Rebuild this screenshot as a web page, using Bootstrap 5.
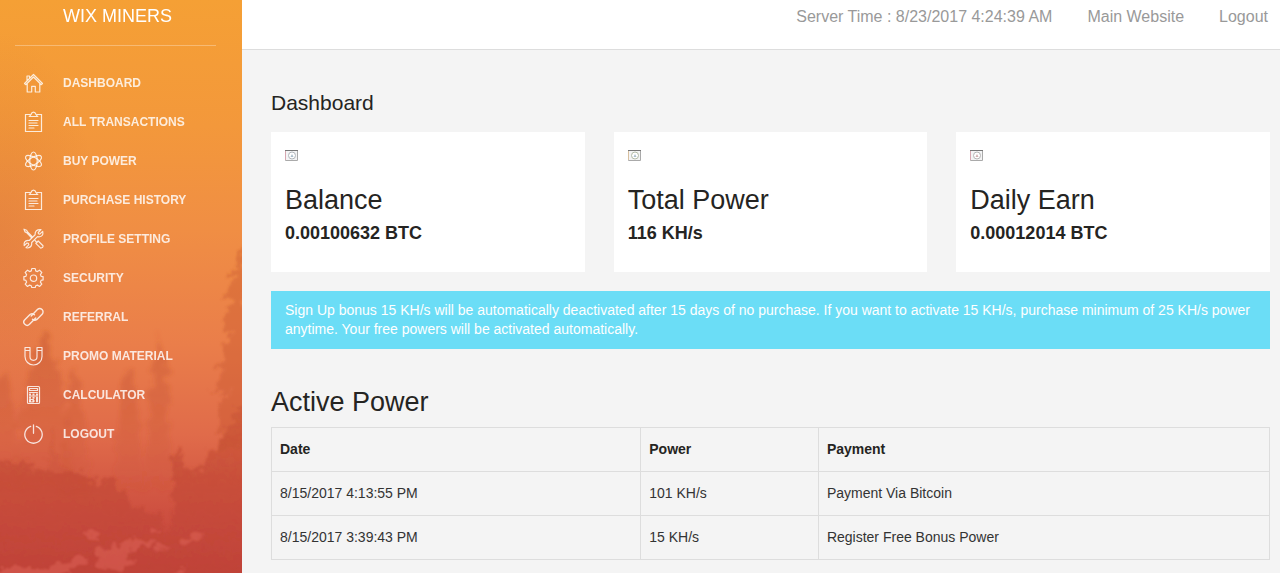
<!DOCTYPE html>
<html lang="en">
<head>
<meta charset="utf-8">
<meta name="viewport" content="width=device-width, initial-scale=1">
<title>Wix Miners - Dashboard</title>
<link rel="stylesheet" href="https://cdn.jsdelivr.net/npm/bootstrap@5.3.0/dist/css/bootstrap.min.css">
<style>
body{font-family:"Liberation Sans",Arial,sans-serif;font-size:14px;line-height:20px;color:#252422;background:#f4f4f4}
.side{width:242px;background:linear-gradient(180deg,#f5a035 0%,#f3983b 22%,#f08e44 40%,#ea7e4a 60%,#e06b4a 76%,#cd4f40 90%,#c1443b 100%)}
.side-scene{position:absolute;inset:0;width:100%;height:100%}
.brand{font-size:18px;line-height:20px;color:#fff;text-decoration:none;padding:6px 0 19px 48px;border-bottom:1px solid rgba(255,255,255,.3);margin:0 26px 0 15px}
.side-nav{padding-top:17px}
.side-nav a{display:flex;align-items:center;height:39px;padding-left:23px;gap:19px;color:rgba(255,255,255,.82);font-size:12px;font-weight:700;text-transform:uppercase}
.side-nav svg{width:21px;height:21px;flex:none;fill:none;stroke:currentColor;stroke-width:1.2;stroke-linejoin:round;stroke-linecap:round}
.topbar{height:50px;background:#fff;border-bottom:1px solid #ddd;font-size:16px;color:#999;padding:7px 12px 0 29px;gap:35px}
.topbar a{color:#999;text-decoration:none}
.content{padding:41px 10px 10px 29px}
.page-title{font-size:21px;line-height:24px;margin:0 0 17px}
.stats{--bs-gutter-x:29px;--bs-gutter-y:20px}
.stat{background:#fff;padding:17px 14px 27px;height:140px}
.stat svg{display:block;width:13px;height:13px}
.stat h2,.power-title{font-size:27px;line-height:30px;margin:0}
.stat h2{margin-top:23px}
.stat p{font-size:18px;line-height:20px;font-weight:700;margin:8px 0 0}
.notice{background:#6bddf6;color:#fff;line-height:19px;padding:10px 14px;margin:19px 0 38px;border:0;border-radius:0}
.power-title{margin-bottom:10px}
.power{--bs-table-bg:transparent;--bs-table-color:#333;border-color:#ddd;table-layout:fixed}
.power th,.power td{padding:11px 8px 12px}
.power th{color:#252422}
.c-date{width:37%}.c-power{width:17.8%}
</style>
<script defer src="https://cdn.jsdelivr.net/npm/bootstrap@5.3.0/dist/js/bootstrap.bundle.min.js"></script>
</head>
<body>
<div class="d-flex min-vh-100">
<aside class="side position-relative flex-shrink-0 overflow-hidden">
<svg class="side-scene" viewBox="0 0 242 573" preserveAspectRatio="xMidYMax slice" aria-hidden="true">
<defs>
<filter id="rough" x="-10%" y="-10%" width="120%" height="120%"><feTurbulence type="fractalNoise" baseFrequency=".11" numOctaves="4" seed="4"/><feDisplacementMap in="SourceGraphic" scale="17" xChannelSelector="R" yChannelSelector="G"/><feGaussianBlur stdDeviation=".9"/></filter>
<filter id="haze" x="-20%" y="-10%" width="140%" height="120%"><feTurbulence type="fractalNoise" baseFrequency=".1" numOctaves="3" seed="9"/><feDisplacementMap in="SourceGraphic" scale="16" xChannelSelector="R" yChannelSelector="G"/><feGaussianBlur stdDeviation="2"/></filter>
<linearGradient id="ground" x1="0" y1="0" x2="0" y2="1"><stop offset="0" stop-color="#c4502f" stop-opacity=".4"/><stop offset=".4" stop-color="#c04733" stop-opacity=".6"/><stop offset="1" stop-color="#bd4038" stop-opacity=".4"/></linearGradient>
<linearGradient id="mist" gradientUnits="userSpaceOnUse" x1="0" y1="320" x2="0" y2="480"><stop offset="0" stop-color="#bd4b2b" stop-opacity=".42"/><stop offset=".5" stop-color="#bd4b2b" stop-opacity=".26"/><stop offset="1" stop-color="#bd4b2b" stop-opacity=".08"/></linearGradient>
<radialGradient id="edge" gradientUnits="userSpaceOnUse" cx="0" cy="230" r="200" gradientTransform="matrix(.5 0 0 1 0 0)"><stop offset="0" stop-color="#a84325" stop-opacity=".13"/><stop offset="1" stop-color="#a84325" stop-opacity="0"/></radialGradient>
</defs>
<path d="M0 0H242V573H0z" fill="url(#edge)"/>
<g filter="url(#haze)" fill="url(#mist)">
<path d="M46 328l5 24 10 11-7 1 12 18-9-1 13 22-10 0 14 24-11 0 14 60H10l12-59-11 2 14-25-8 1 13-21-7 1 11-21-6 1 8-15z"/>
<path d="M158 332l4 24 9 16-7 0 9 30-7 0 10 88h-34l9-88-6 0 9-27-6-1 8-19zM128 366l8 24 8 100h-30l8-100zM74 364l6 25 12 106H58l10-106zM6 372l8 34 8 84H-12V390z"/>
</g>
<g filter="url(#rough)">
<path d="M244 246l-8 13 3 5-11 11 7 1-10 22 7 0-9 22-1 10 8-2-9 33-5 7 9 1-8 17-8 5 20 1-10 16v40h30z" fill="#c0512e" opacity=".34"/>
<path d="M-6 456l22 9 13-2 10 7 22 3 17-3 10 10 14 4 4-9 8 6 3 10 13 3 2 14 10-1 7 12 12-9 3 24 5 0 4-23 0-55 7-7 5 18 13 4 7-14 5-10 6 6 7-23 7-6 8-16 20-8V590H-6z" fill="url(#ground)"/>
<path d="M52 424l4 36 11 10H47z" fill="#ba482f" opacity=".14"/>
</g>
<g filter="url(#rough)" fill="#e56c60" opacity=".42">
<path d="M0 568l28-1 34-2 19-8 8 4-18 10-25 8H0zM93 556l8-10 12 3 9-6 10 6-7 8 11 5-14 8-20-2zM120 544l10-7 14 1 8 7-16 3zM153 546l10-2 8 5-14 1zM180 541l12-6 13-1-8 7-15 5zM84 532l12 0 3 8-13-3zM150 528l9 0 2 5-9-1zM171 575l10-8 6 2-6 9z"/>
</g>
</svg>
<div class="position-relative">
<a href="#" class="brand d-block">WIX MINERS</a>
<nav class="nav flex-column side-nav" aria-label="Main">
<a href="#" class="text-decoration-none"><svg viewBox="0 0 21 21"><path d="M1.500 11.500L10.500 2.500l9 9-1.200 1.200-7.800-7.700-7.800 7.700zM4 8.500V4h2.500v2.500M4.200 11.500V20h4.500v-5.700h3.600V20h4.500v-8.500"/></svg>Dashboard</a>
<a href="#" class="text-decoration-none"><svg viewBox="0 0 21 21"><path d="M7 3.500H2.500v17h16v-17H14M6.500 5.500h8L13 3.500q-.7-2.300-2.500-2.300T8 3.500zM6 9.500h9M6 12h8M6 14.500h9M6 17h5" stroke-linejoin="miter"/></svg>All Transactions</a>
<a href="#" class="text-decoration-none"><svg viewBox="0 0 21 21"><ellipse cx="10.500" cy="11" rx="3.700" ry="9"/><ellipse cx="10.500" cy="11" rx="3.700" ry="9" transform="rotate(60 10.500 11)"/><ellipse cx="10.500" cy="11" rx="3.700" ry="9" transform="rotate(120 10.500 11)"/></svg>Buy Power</a>
<a href="#" class="text-decoration-none"><svg viewBox="0 0 21 21"><path d="M7 3.500H2.500v17h16v-17H14M6.500 5.500h8L13 3.500q-.7-2.300-2.500-2.300T8 3.500zM6 9.500h9M6 12h8M6 14.500h9M6 17h5" stroke-linejoin="miter"/></svg>Purchase History</a>
<a href="#" class="text-decoration-none"><svg viewBox="0 0 21 21"><path d="M18 1.600l-2.800 2.900.3 1.300 1.300.4L19.700 3.300q1.100 5.100-3.700 5.500l-1.500-.1-5.800 5.800q.5 4.800-4 5.500l-1.700-.3 2.800-2.800-.4-1.500-1.500-.4L1.200 17.600Q.4 12.900 5 12.400l1.300.1 5.800-5.700Q11.700 1.200 18 1.600z"/><path d="M1 1.200l2.600 1 1 1.800 4.600 4.700M1 1.200l1.100 2.700 1.700.9L8.400 9.500M12 12.500l2 2M12.800 15.400l2.400-2.400 4.800 4.700q.3 2.200-2.300 2.400z"/></svg>Profile Setting</a>
<a href="#" class="text-decoration-none"><svg viewBox="0 0 21 21"><path d="M8.800 1.500h3.400l.5 2.400 1.700.7 2.100-1.400 2.300 2.300-1.400 2.100.7 1.700 2 .4v3.200l-2 .5-.7 1.700 1.400 2.100-2.300 2.300-2.100-1.400-1.700.7-.5 1.900H8.800l-.5-1.900-1.700-.7-2.100 1.400-2.300-2.300 1.400-2.100-.7-1.700-2-.5V9.700l2-.4.7-1.700-1.400-2.100 2.300-2.300 2.100 1.400 1.700-.7z"/><circle cx="10.500" cy="11.200" r="3.200"/></svg>Security</a>
<a href="#" class="text-decoration-none"><svg viewBox="0 0 21 21"><path d="M8.200 10l6.200-6.400a3.200 3.200 0 0 1 4.700 4.600l-5.200 5.200q-2.300 1.800-4.400-.2M12.700 12l-6.200 6.300a3.200 3.200 0 0 1-4.700-4.600L7 8.500q2.300-1.800 4.400.2" stroke-width="1.400"/></svg>Referral</a>
<a href="#" class="text-decoration-none"><svg viewBox="0 0 21 21"><path d="M2 2.500h5v9.300a3.500 3.500 0 0 0 7 0V2.500h5v9a8.500 8.500 0 0 1-17 0zM2 5.500h5M14 5.500h5"/></svg>Promo Material</a>
<a href="#" class="text-decoration-none"><svg viewBox="0 0 21 21"><rect x="4.500" y="2.500" width="12" height="17" rx="1"/><path d="M6.500 4.500h8v2h-8z"/><path d="M6.500 8.500h8M6.500 12h8M6.500 15.500h4M6.500 18h4" stroke-width="1"/><g fill="currentColor" stroke="none"><path d="M6 9.500h2v2H6zM9.500 9.500h2v2h-2zM13 9.500h2v2h-2zM6 12.800h2v2H6zM9.500 12.800h2v2h-2zM13 12.800h2v5.400h-2zM6 16h2v2H6zM9.500 16h2v2h-2z"/></g></svg>Calculator</a>
<a href="#" class="text-decoration-none"><svg viewBox="0 0 21 21"><path d="M7.700 3.300a8.700 8.700 0 1 0 5.600 0M10.500 1.800v8.500" stroke-width="1.300"/></svg>Logout</a>
</nav>
</div>
</aside>
<div class="flex-grow-1" style="min-width:0">
<header class="topbar d-flex justify-content-end"><span>Server Time : 8/23/2017 4:24:39 AM</span><a href="#">Main Website</a><a href="#">Logout</a></header>
<main class="content">
<h1 class="page-title fw-normal">Dashboard</h1>
<div class="row row-cols-1 row-cols-md-3 gy-0 stats">
<div class="col"><section class="stat"><svg viewBox="0 0 13 13" aria-hidden="true"><path d="M.5 1.500h12v10H.5z" fill="#f4f4f5" stroke="#aaa"/><path d="M0 1.500h13" stroke="#777"/><circle cx="7" cy="6.500" r="3.500" fill="#fff" stroke="#b0b5ba"/><path d="M5.500 8L7 5l1.500 3z" fill="#aabdca"/><path d="M.5 2v9" stroke="#d6a7b0"/></svg><h2 class="fw-normal">Balance</h2><p>0.00100632 BTC</p></section></div>
<div class="col"><section class="stat"><svg viewBox="0 0 13 13" aria-hidden="true"><path d="M.5 1.500h12v10H.5z" fill="#f4f4f5" stroke="#aaa"/><path d="M0 1.500h13" stroke="#777"/><circle cx="7" cy="6.500" r="3.500" fill="#fff" stroke="#b3bba8"/><path d="M5.500 8L7 5l1.500 3z" fill="#aabdca"/><path d="M.5 2v9" stroke="#d8c0a0"/></svg><h2 class="fw-normal">Total Power</h2><p>116 KH/s</p></section></div>
<div class="col"><section class="stat"><svg viewBox="0 0 13 13" aria-hidden="true"><path d="M.5 1.500h12v10H.5z" fill="#f4f4f5" stroke="#aaa"/><path d="M0 1.500h13" stroke="#777"/><circle cx="7" cy="6.500" r="3.500" fill="#fff" stroke="#b5b5b5"/><path d="M5.500 8L7 5l1.500 3z" fill="#cfaeb0"/><path d="M.5 2v9" stroke="#d6a7b0"/></svg><h2 class="fw-normal">Daily Earn</h2><p>0.00012014 BTC</p></section></div>
</div>
<div class="alert notice" role="alert">Sign Up bonus 15 KH/s will be automatically deactivated after 15 days of no purchase. If you want to activate 15 KH/s, purchase minimum of 25 KH/s power anytime. Your free powers will be activated automatically.</div>
<h2 class="power-title fw-normal">Active Power</h2>
<table class="table table-bordered power mb-0">
<thead><tr><th class="c-date" scope="col">Date</th><th class="c-power" scope="col">Power</th><th scope="col">Payment</th></tr></thead>
<tbody><tr><td>8/15/2017 4:13:55 PM</td><td>101 KH/s</td><td>Payment Via Bitcoin</td></tr>
<tr><td>8/15/2017 3:39:43 PM</td><td>15 KH/s</td><td>Register Free Bonus Power</td></tr></tbody>
</table>
</main>
</div>
</div>
</body>
</html>
